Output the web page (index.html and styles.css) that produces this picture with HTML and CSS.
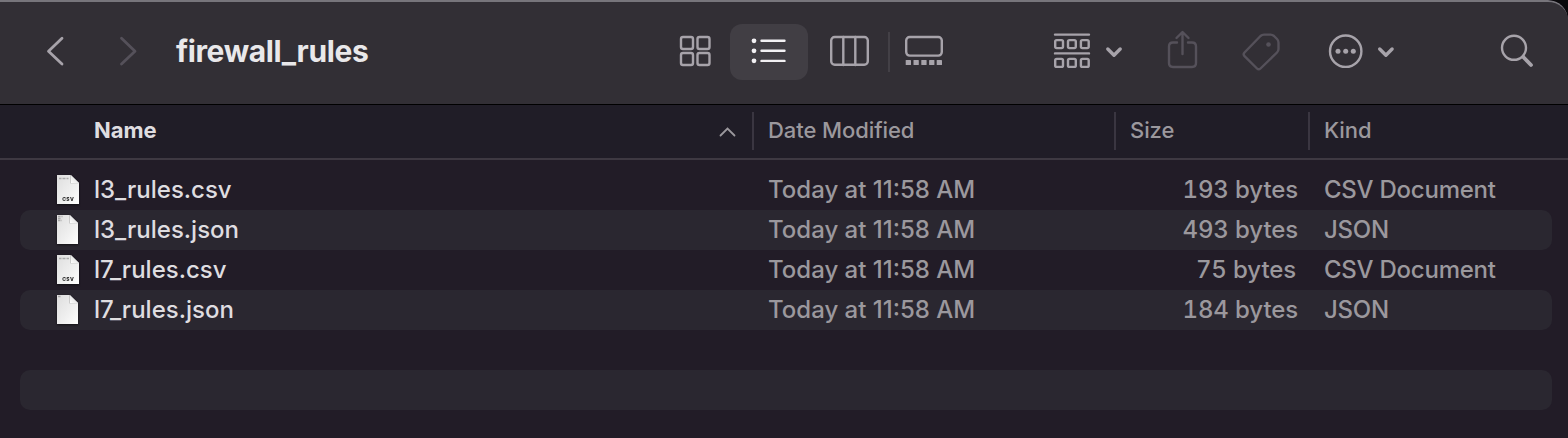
FILE: index.html
```html
<!DOCTYPE html>
<html lang="en">
<head>
<meta charset="utf-8">
<title>firewall_rules</title>
<link rel="stylesheet" href="styles.css">
</head>
<body>
<main class="window">
  <header class="toolbar">
    <svg class="icon back" width="32" height="56" viewBox="40 24 32 56"><path d="M62 38.3 48.5 51.2 62 64"/></svg>
    <svg class="icon forward dim" width="32" height="56" viewBox="112 24 32 56"><path d="M121.500 38.300 135 51.200 121.500 64"/></svg>
    <h1 class="title">firewall_rules</h1>
    <svg class="icon grid" width="50" height="56" viewBox="670 24 50 56"><rect x="681" y="37" width="12" height="12" rx="2"/><rect x="697.500" y="37" width="12" height="12" rx="2"/><rect x="681" y="53" width="12" height="12" rx="2"/><rect x="697.500" y="53" width="12" height="12" rx="2"/></svg>
    <div class="selected"><svg class="icon bright" width="78" height="56" viewBox="730 24 78 56"><path d="M761.500 40.700H784.500M761.500 50.800H784.500M761.500 60.900H784.500"/><g class="solid"><circle cx="754" cy="40.800" r="2.400"/><circle cx="754" cy="50.800" r="2.400"/><circle cx="754" cy="60.800" r="2.400"/></g></svg></div>
    <svg class="icon columns" width="60" height="56" viewBox="820 24 60 56"><rect x="831.200" y="37" width="36.600" height="27.800" rx="3.500"/><path d="M843.300 37V65M855.300 37V65"/></svg>
    <div class="separator"></div>
    <svg class="icon gallery" width="60" height="56" viewBox="895 24 60 56"><rect x="906.200" y="37" width="35.600" height="18.600" rx="3.500"/><g class="solid"><rect x="905.700" y="60" width="5.300" height="5" rx=".6"/><rect x="913.500" y="60" width="5.300" height="5" rx=".6"/><rect x="921.300" y="60" width="5.300" height="5" rx=".6"/><rect x="929.100" y="60" width="5.300" height="5" rx=".6"/><rect x="936.700" y="60" width="5.300" height="5" rx=".6"/></g></svg>
    <svg class="icon group" width="90" height="56" viewBox="1040 24 90 56"><path d="M1055 34.600H1089M1055 53.400H1089"/><rect x="1055.200" y="40.100" width="7.800" height="8" rx="1.500"/><rect x="1068" y="40.100" width="7.800" height="8" rx="1.500"/><rect x="1080.900" y="40.100" width="7.800" height="8" rx="1.500"/><rect x="1055.200" y="58.900" width="7.800" height="8" rx="1.500"/><rect x="1068" y="58.900" width="7.800" height="8" rx="1.500"/><rect x="1080.900" y="58.900" width="7.800" height="8" rx="1.500"/><path class="bold" d="M1107.800 49 1114 55.200 1120.200 49"/></svg>
    <svg class="icon share dim" width="50" height="56" viewBox="1158 24 50 56"><path d="M1177 42.500H1173Q1169 42.500 1169 46.500V63Q1169 67 1173 67H1192Q1196 67 1196 63V46.500Q1196 42.500 1192 42.500H1188M1182.500 54V32.500M1176.500 38 1182.500 32 1188.500 38"/></svg>
    <svg class="icon tag dim" width="60" height="56" viewBox="1232 24 60 56"><path d="M1244.500 52.500 1260.500 36Q1262 34.600 1264 34.600H1270.500Q1272.500 34.600 1274 36L1277 39Q1278.500 40.500 1278.500 42.500V49Q1278.500 51 1277 52.500L1260.500 68.500Q1258.700 70.200 1257 68.500L1244.500 56.200Q1242.800 54.300 1244.500 52.500Z"/><circle class="dot" cx="1268.500" cy="44.500" r="2.300"/></svg>
    <svg class="icon more" width="90" height="56" viewBox="1315 24 90 56"><circle cx="1345.700" cy="51.200" r="15.700"/><g class="solid"><circle cx="1338" cy="51.200" r="2.500"/><circle cx="1345.700" cy="51.200" r="2.500"/><circle cx="1353.300" cy="51.200" r="2.500"/></g><path class="bold" d="M1379.700 49 1385.900 55.200 1392.100 49"/></svg>
    <svg class="icon search" width="50" height="56" viewBox="1492 24 50 56"><circle cx="1514" cy="47.800" r="12"/><path class="handle" d="M1523.500 57.200 1531 65"/></svg>
  </header>

  <div class="columns-head">
    <div class="cell name">Name<svg class="sort" width="18" height="12" viewBox="0 0 18 12"><path d="M2.500 9.500 9.500 2.500 16.500 9.500"/></svg></div>
    <div class="cell date">Date Modified</div>
    <div class="cell size">Size</div>
    <div class="cell kind">Kind</div>
  </div>

  <svg class="defs" width="0" height="0">
    <defs>
      <linearGradient id="paper" x1="0" y1="0" x2="1" y2="1"><stop offset="0" stop-color="#dedede"/><stop offset=".6" stop-color="#f0f0f0"/><stop offset="1" stop-color="#fff"/></linearGradient>
      <linearGradient id="fold" x1="0" y1="1" x2="1" y2="0"><stop offset="0" stop-color="#fff"/><stop offset="1" stop-color="#d0d0d0"/></linearGradient>
    </defs>
  </svg>

  <div class="list">
    <div class="row">
      <svg class="file" width="24" height="32" viewBox="0 0 24 32"><path fill="url(#paper)" d="M1 1H14.500L23 9V30H1Z"/><path class="shade" d="M14 1V9.500H23"/><path fill="url(#fold)" d="M15 1 23 9H15Z"/><path class="print" d="M3 4.500H12.500"/><text x="12.200" y="27.200">CSV</text></svg>
      <span class="filename f1">l3_rules.csv</span><span class="modified">Today at 11:58 AM</span><span class="bytes">193 bytes</span><span class="type csv">CSV Document</span>
    </div>
    <div class="row alt">
      <svg class="file" width="24" height="32" viewBox="0 0 24 32"><path fill="url(#paper)" d="M1 1H13.500L22 9V30H1Z"/><path class="shade" d="M13 1V9.500H22"/><path fill="url(#fold)" d="M14 1 22 9H14Z"/><path class="print" d="M2 2.500H6.500M2 4.500H5M2 6.500H5.500"/></svg>
      <span class="filename f2">l3_rules.json</span><span class="modified">Today at 11:58 AM</span><span class="bytes">493 bytes</span><span class="type">JSON</span>
    </div>
    <div class="row">
      <svg class="file" width="24" height="32" viewBox="0 0 24 32"><path fill="url(#paper)" d="M1 1H14.500L23 9V30H1Z"/><path class="shade" d="M14 1V9.500H23"/><path fill="url(#fold)" d="M15 1 23 9H15Z"/><path class="print" d="M3 4.500H13"/><text x="12.200" y="27.200">CSV</text></svg>
      <span class="filename f3">l7_rules.csv</span><span class="modified">Today at 11:58 AM</span><span class="bytes short">75 bytes</span><span class="type csv">CSV Document</span>
    </div>
    <div class="row alt">
      <svg class="file" width="24" height="32" viewBox="0 0 24 32"><path fill="url(#paper)" d="M1 1H13.500L22 9V30H1Z"/><path class="shade" d="M13 1V9.500H22"/><path fill="url(#fold)" d="M14 1 22 9H14Z"/><path class="print" d="M2 2.500H5"/></svg>
      <span class="filename f4">l7_rules.json</span><span class="modified">Today at 11:58 AM</span><span class="bytes">184 bytes</span><span class="type">JSON</span>
    </div>
    <div class="row"></div>
    <div class="row alt"></div>
  </div>
</main>
</body>
</html>
```
FILE: styles.css
```css
* { box-sizing: border-box; }
body { margin: 0; background: #09080b; font-family: Inter, "Liberation Sans", sans-serif; }
.window { width: 1568px; height: 438px; overflow: hidden; background: #221c27; border-top-right-radius: 20px; }
.toolbar { display: flex; align-items: center; height: 105px; padding: 0 0 3px 40px; background: #322f35; border-top: 2px solid #77757b; border-bottom: 1px solid #000; border-top-right-radius: 20px; }
.icon { display: block; flex: none; fill: none; stroke: #a7a3aa; stroke-width: 2.4; stroke-linecap: round; stroke-linejoin: round; }
.back, .forward { stroke-width: 2.8; }
.forward { margin-left: 40px; }
.dim { stroke: #55515a; }
.bright { stroke: #f2f0f3; }
.solid { fill: #a7a3aa; stroke: none; }
.bright .solid { fill: #f2f0f3; }
.dot { fill: #55515a; stroke: none; }
.bold { stroke-width: 3.4; }
.handle { stroke-width: 3.8; }
.title { width: 494px; margin: 0 0 0 32px; padding-bottom: 2px; flex: none; font-size: 30px; line-height: 40px; font-weight: 700; letter-spacing: -.4px; color: #e9e8ea; }
.selected { margin: 0 12px 0 10px; background: #413e44; border-radius: 12px; }
.separator { width: 2px; height: 40px; margin: 0 5px 0 8px; background: #434046; }
.group { margin-left: 85px; }
.share { margin-left: 28px; }
.tag { margin-left: 24px; }
.more { margin-left: 23px; }
.search { margin-left: 87px; }
.columns-head { display: grid; grid-template-columns: 752px 362px 194px 1fr; height: 55px; padding-top: 7px; background: #201d27; border-bottom: 2px solid #3e3942; font-size: 22px; line-height: 36px; font-weight: 500; letter-spacing: -.08px; color: #9b989d; }
.cell { height: 38px; padding-left: 14px; border-left: 2px solid #3a3641; }
.cell.name { display: flex; justify-content: space-between; align-items: center; padding: 0 16px 2px 94px; border: 0; font-weight: 700; color: #dfdde0; }
.sort { margin-top: 3px; fill: none; stroke: #9b989d; stroke-width: 1.8; stroke-linecap: round; }
.defs { display: block; }
.list { padding: 10px 16px 0 20px; }
.row { display: grid; grid-template-columns: 38px 674px 377px 153px 1fr; align-items: center; height: 40px; padding-left: 36px; border-radius: 10px; font-size: 24px; line-height: 40px; font-weight: 450; color: #9b989d; white-space: nowrap; }
.alt { background: #2a2730; }
.filename { color: #dfdde0; }
.bytes { text-align: right; font-variant-numeric: tabular-nums; letter-spacing: -.12px; }
.short { padding-right: 2px; }
.type { padding-left: 26px; letter-spacing: -.25px; }
.file { filter: drop-shadow(0 1px 1px #0008); }
.file text { font-size: 5px; font-weight: 800; letter-spacing: .3px; fill: #222; text-anchor: middle; }
.shade { fill: #0002; }
.print { stroke: #aaa; stroke-width: 1.5; stroke-dasharray: 2 .5 1 .5; }
```
